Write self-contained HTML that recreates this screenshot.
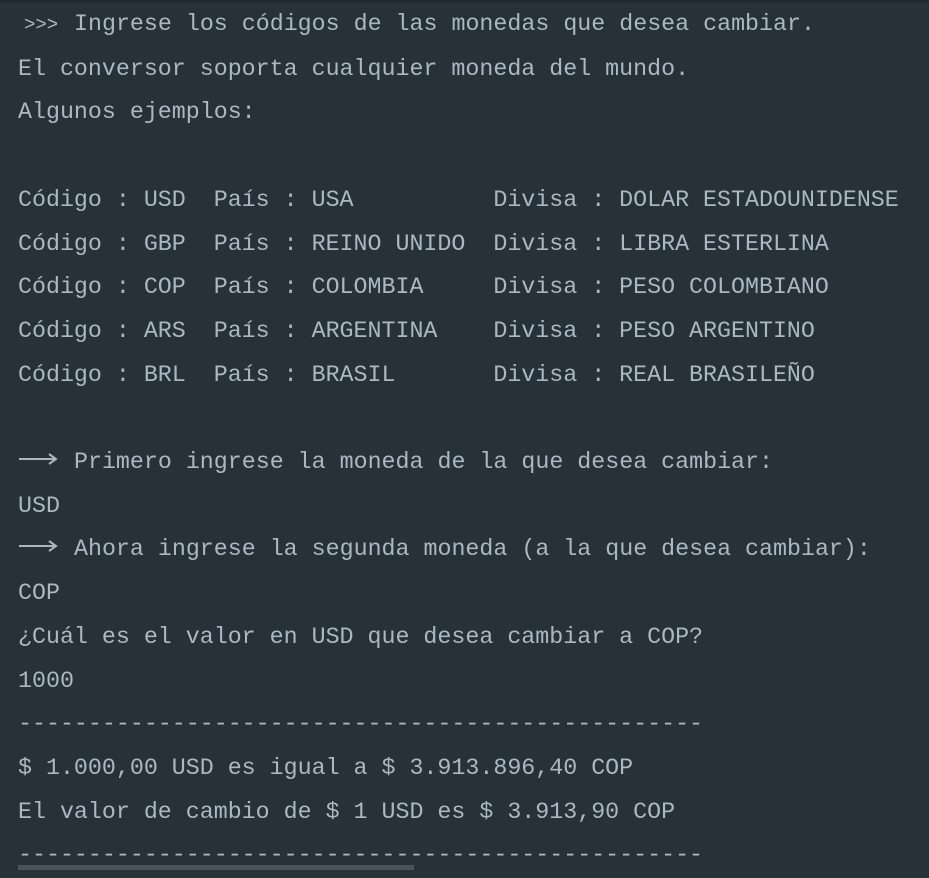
<!DOCTYPE html>
<html><head><meta charset="utf-8"><style>
html,body{margin:0;padding:0;}
body{width:929px;height:867px;background:#263238;overflow:hidden;position:relative;border-top:3px solid #1f292e;box-sizing:border-box;}
pre{margin:0;position:absolute;left:18px;top:0px;font-family:"Liberation Mono",monospace;font-size:23.3px;line-height:43.7px;color:#abb8c3;white-space:pre;}
.ar{display:inline-block;width:42px;height:20px;vertical-align:middle;position:relative;top:-3px;}
.pp{display:inline-block;width:56px;padding-left:6px;box-sizing:border-box;font-size:19px;}
.sb{position:absolute;left:18px;top:862px;width:396px;height:5px;background:#4a5357;}
</style></head><body>
<pre><span class="pp">&gt;&gt;&gt;</span>Ingrese los códigos de las monedas que desea cambiar.
El conversor soporta cualquier moneda del mundo.
Algunos ejemplos:

Código : USD  País : USA          Divisa : DOLAR ESTADOUNIDENSE
Código : GBP  País : REINO UNIDO  Divisa : LIBRA ESTERLINA
Código : COP  País : COLOMBIA     Divisa : PESO COLOMBIANO
Código : ARS  País : ARGENTINA    Divisa : PESO ARGENTINO
Código : BRL  País : BRASIL       Divisa : REAL BRASILEÑO

<svg class="ar" viewBox="0 0 42 20"><path d="M1 10H38M31 5L38 10L31 15" stroke="#abb8c3" stroke-width="2" fill="none"/></svg> Primero ingrese la moneda de la que desea cambiar:
USD
<svg class="ar" viewBox="0 0 42 20"><path d="M1 10H38M31 5L38 10L31 15" stroke="#abb8c3" stroke-width="2" fill="none"/></svg> Ahora ingrese la segunda moneda (a la que desea cambiar):
COP
¿Cuál es el valor en USD que desea cambiar a COP?
1000
-------------------------------------------------
$ 1.000,00 USD es igual a $ 3.913.896,40 COP
El valor de cambio de $ 1 USD es $ 3.913,90 COP
-------------------------------------------------</pre>
<div class="sb"></div>
</body></html>
